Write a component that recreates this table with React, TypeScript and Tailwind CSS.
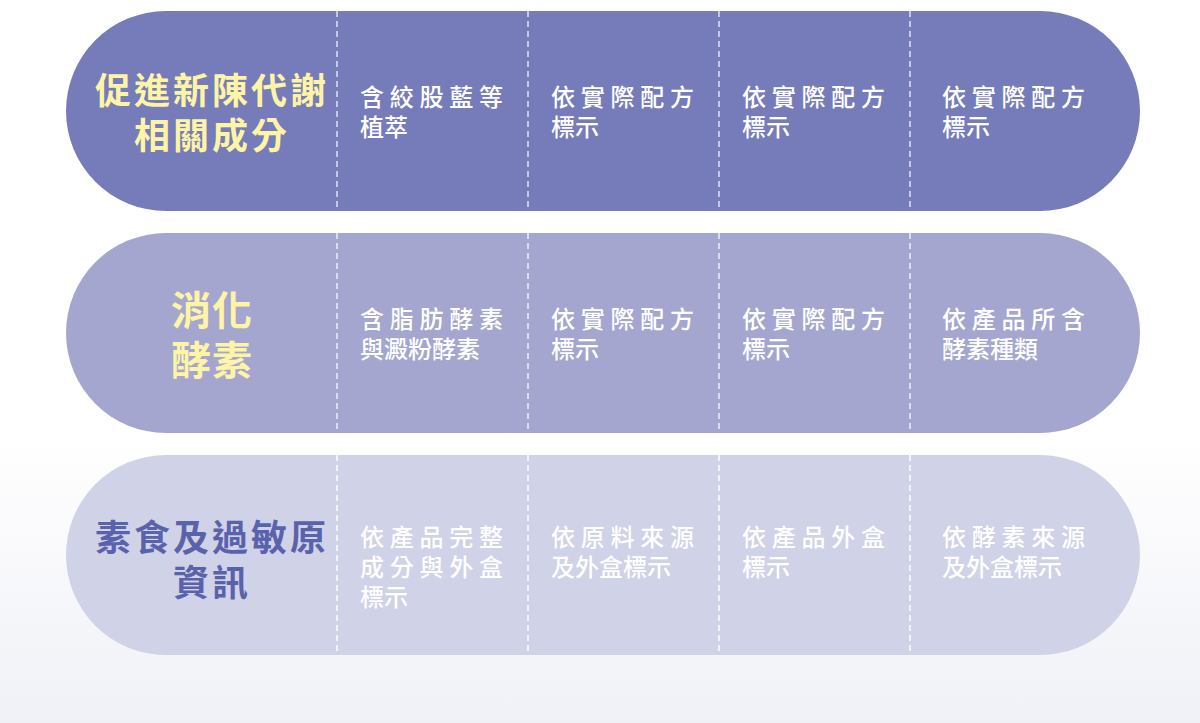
const rows = [
  {
    title: ["促進新陳代謝", "相關成分"],
    titleClass: "text-[36px] leading-[45px] tracking-[3px] text-[#fdf4a6]",
    bg: "bg-[#767bb9]",
    dash: "bg-[repeating-linear-gradient(to_bottom,#c6c8e4_0_6px,transparent_6px_10px)]",
    text: "text-white",
    cell: "items-center",
    cells: ["含絞股藍等植萃", "依實際配方標示", "依實際配方標示", "依實際配方標示"],
  },
  {
    title: ["消化", "酵素"],
    titleClass: "text-[40px] leading-[50px] tracking-[1px] text-[#fdf4a6]",
    bg: "bg-[#a4a6d0]",
    dash: "bg-[repeating-linear-gradient(to_bottom,#dcdcef_0_6px,transparent_6px_10px)]",
    text: "text-white",
    cell: "items-center",
    cells: ["含脂肪酵素與澱粉酵素", "依實際配方標示", "依實際配方標示", "依產品所含酵素種類"],
  },
  {
    title: ["素食及過敏原", "資訊"],
    titleClass: "text-[36px] leading-[45px] tracking-[3px] text-[#5b62ac] translate-y-[3px]",
    bg: "bg-[#d0d2e7]",
    dash: "bg-[repeating-linear-gradient(to_bottom,#f2f2f9_0_6px,transparent_6px_10px)]",
    text: "text-white",
    cell: "items-start pt-[66px]",
    cells: ["依產品完整成分與外盒標示", "依原料來源及外盒標示", "依產品外盒標示", "依酵素來源及外盒標示"],
  },
];

export default function App() {
  return (
    <div
      className="w-[1200px] h-[723px] overflow-hidden bg-gradient-to-b from-white via-white via-60% to-[#f0f1f7] pt-[11px] pl-[66px]"
      style={{ fontFamily: '"Noto Sans CJK TC", "Noto Sans", sans-serif' }}
    >
      <div className="flex flex-col gap-[22px] w-[1074px]">
        {rows.map((row, i) => (
          <div
            key={i}
            className={`grid grid-cols-[270px_191px_191px_191px_1fr] h-[200px] rounded-full overflow-hidden ${row.bg}`}
          >
            <div className="flex flex-col items-center justify-center pl-[22px]">
              {row.title.map((t) => (
                <div key={t} className={`font-bold ${row.titleClass}`}>
                  {t}
                </div>
              ))}
            </div>
            {row.cells.map((c, j) => (
              <div key={j} className={`relative flex ${row.cell}`}>
                <div className={`absolute left-0 top-0 h-full w-[2px] ${row.dash}`} />
                <p
                  className={`w-[143px] text-justify text-[24px] leading-[30px] font-medium ${row.text} ${
                    j === 3 ? "ml-[33px]" : "ml-6"
                  }`}
                >
                  {c}
                </p>
              </div>
            ))}
          </div>
        ))}
      </div>
    </div>
  );
}
